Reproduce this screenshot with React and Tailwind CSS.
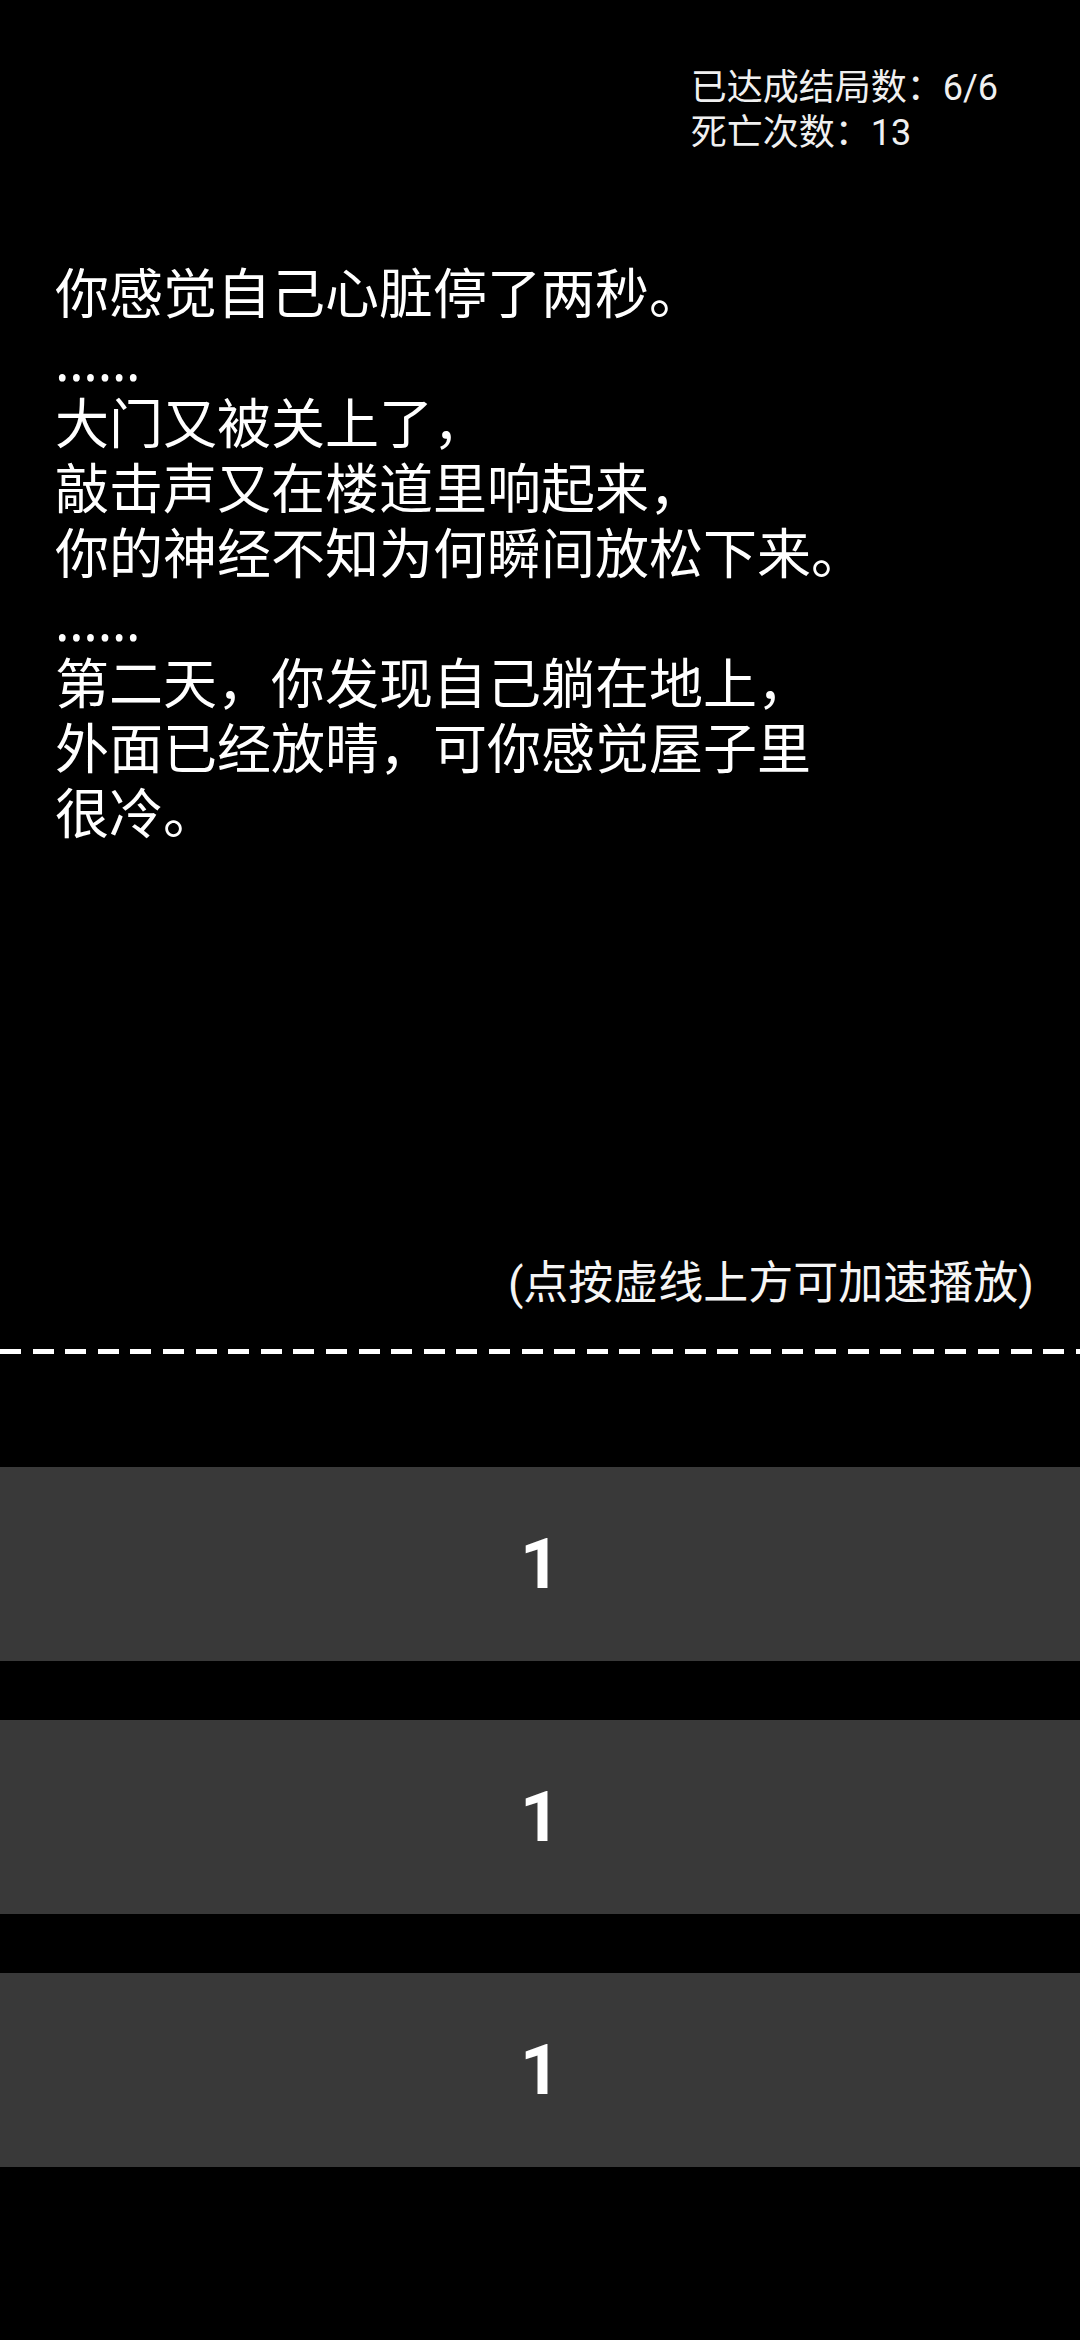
const storyLines = [
  "你感觉自己心脏停了两秒。",
  "……",
  "大门又被关上了，",
  "敲击声又在楼道里响起来，",
  "你的神经不知为何瞬间放松下来。",
  "……",
  "第二天，你发现自己躺在地上，",
  "外面已经放晴，可你感觉屋子里",
  "很冷。",
];

const choices = ["1", "1", "1"];

export default function App() {
  return (
    <div className="min-h-[2340px] w-[1080px] bg-black text-white font-['Roboto','Noto_Sans_CJK_SC',sans-serif] flex flex-col">
      {/* Stats */}
      <div className="flex justify-end pt-[66px] pr-[82px]">
        <div className="text-[36px] leading-[45px] text-[#f0f0f0]">
          <div>已达成结局数：6/6</div>
          <div>死亡次数：13</div>
        </div>
      </div>

      {/* Story */}
      <div className="mt-[107px] px-[55px] text-[54px] leading-[65px] whitespace-nowrap">
        {storyLines.map((line, i) =>
          line === "……" ? (
            <div key={i} className="font-['Noto_Sans',sans-serif]">
              {line}
            </div>
          ) : (
            <div key={i}>{line}</div>
          )
        )}
      </div>

      {/* Hint */}
      <div className="mt-[408px] pr-[46px] text-right text-[45px] leading-[56px] text-[#f5f5f5]">
        (点按虚线上方可加速播放)
      </div>

      {/* Divider */}
      <div className="mt-[37px] h-[5px] w-full bg-[repeating-linear-gradient(90deg,#ffffff_0px,#ffffff_21px,transparent_21px,transparent_32.6px)]" />

      {/* Choices */}
      <div className="mt-[113px] flex flex-col gap-[59px]">
        {choices.map((label, i) => (
          <button
            key={i}
            className="h-[194px] w-full bg-[#393939] flex items-center justify-center text-[70px] font-bold text-white"
          >
            {label}
          </button>
        ))}
      </div>
    </div>
  );
}
